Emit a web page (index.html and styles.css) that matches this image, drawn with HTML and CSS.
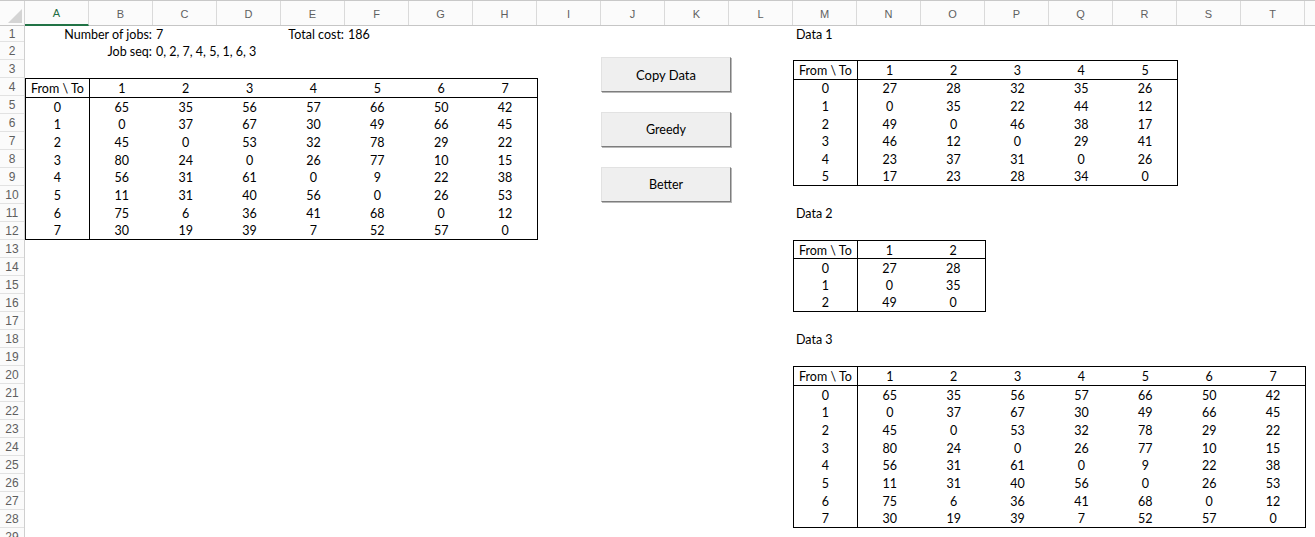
FILE: index.html
```html
<!DOCTYPE html>
<html>
<head>
<meta charset="utf-8">
<title>Sheet</title>
<link rel="stylesheet" href="styles.css">
</head>
<body>
<div class="app">
  <div class="colheads">
    <div class="corner"><svg width="25" height="26" viewBox="0 0 25 26"><polygon points="22,9 22,23 8,23" fill="#d4d4d4"/></svg></div>
    <div class="ch sel">A</div><div class="ch">B</div><div class="ch">C</div><div class="ch">D</div><div class="ch">E</div><div class="ch">F</div><div class="ch">G</div><div class="ch">H</div><div class="ch">I</div><div class="ch">J</div><div class="ch">K</div><div class="ch">L</div><div class="ch">M</div><div class="ch">N</div><div class="ch">O</div><div class="ch">P</div><div class="ch">Q</div><div class="ch">R</div><div class="ch">S</div><div class="ch">T</div><div class="ch"></div>
  </div>
  <div class="sheet">
    <div class="rowheads">
      <div class="rh first">1</div><div class="rh">2</div><div class="rh">3</div><div class="rh">4</div><div class="rh">5</div><div class="rh">6</div><div class="rh">7</div><div class="rh">8</div><div class="rh">9</div><div class="rh">10</div><div class="rh">11</div><div class="rh">12</div><div class="rh">13</div><div class="rh">14</div><div class="rh">15</div><div class="rh">16</div><div class="rh">17</div><div class="rh">18</div><div class="rh">19</div><div class="rh">20</div><div class="rh">21</div><div class="rh">22</div><div class="rh">23</div><div class="rh">24</div><div class="rh">25</div><div class="rh">26</div><div class="rh">27</div><div class="rh">28</div><div class="rh">29</div>
    </div>
    <div class="cells">
      <div class="lbl r1 c-ab">Number of jobs:</div>
      <div class="val r1 c-c">7</div>
      <div class="lbl r2 c-ab">Job seq:</div>
      <div class="val r2 c-cd">0, 2, 7, 4, 5, 1, 6, 3</div>
      <div class="lbl r1 c-e">Total cost:</div>
      <div class="val r1 c-f">186</div>
      <div class="val r1 c-m">Data 1</div>
      <div class="val r11 c-m">Data 2</div>
      <div class="val r18 c-m">Data 3</div>

      <div class="tbl t-main">
        <div class="tr c8"><span>From \ To</span><span>1</span><span>2</span><span>3</span><span>4</span><span>5</span><span>6</span><span>7</span></div>
        <div class="tr c8"><span>0</span><span>65</span><span>35</span><span>56</span><span>57</span><span>66</span><span>50</span><span>42</span></div>
        <div class="tr c8"><span>1</span><span>0</span><span>37</span><span>67</span><span>30</span><span>49</span><span>66</span><span>45</span></div>
        <div class="tr c8"><span>2</span><span>45</span><span>0</span><span>53</span><span>32</span><span>78</span><span>29</span><span>22</span></div>
        <div class="tr c8"><span>3</span><span>80</span><span>24</span><span>0</span><span>26</span><span>77</span><span>10</span><span>15</span></div>
        <div class="tr c8"><span>4</span><span>56</span><span>31</span><span>61</span><span>0</span><span>9</span><span>22</span><span>38</span></div>
        <div class="tr c8"><span>5</span><span>11</span><span>31</span><span>40</span><span>56</span><span>0</span><span>26</span><span>53</span></div>
        <div class="tr c8"><span>6</span><span>75</span><span>6</span><span>36</span><span>41</span><span>68</span><span>0</span><span>12</span></div>
        <div class="tr c8"><span>7</span><span>30</span><span>19</span><span>39</span><span>7</span><span>52</span><span>57</span><span>0</span></div>
      </div>

      <div class="tbl t-d1">
        <div class="tr c6"><span>From \ To</span><span>1</span><span>2</span><span>3</span><span>4</span><span>5</span></div>
        <div class="tr c6"><span>0</span><span>27</span><span>28</span><span>32</span><span>35</span><span>26</span></div>
        <div class="tr c6"><span>1</span><span>0</span><span>35</span><span>22</span><span>44</span><span>12</span></div>
        <div class="tr c6"><span>2</span><span>49</span><span>0</span><span>46</span><span>38</span><span>17</span></div>
        <div class="tr c6"><span>3</span><span>46</span><span>12</span><span>0</span><span>29</span><span>41</span></div>
        <div class="tr c6"><span>4</span><span>23</span><span>37</span><span>31</span><span>0</span><span>26</span></div>
        <div class="tr c6"><span>5</span><span>17</span><span>23</span><span>28</span><span>34</span><span>0</span></div>
      </div>

      <div class="tbl t-d2">
        <div class="tr c3"><span>From \ To</span><span>1</span><span>2</span></div>
        <div class="tr c3"><span>0</span><span>27</span><span>28</span></div>
        <div class="tr c3"><span>1</span><span>0</span><span>35</span></div>
        <div class="tr c3"><span>2</span><span>49</span><span>0</span></div>
      </div>

      <div class="tbl t-d3">
        <div class="tr c8"><span>From \ To</span><span>1</span><span>2</span><span>3</span><span>4</span><span>5</span><span>6</span><span>7</span></div>
        <div class="tr c8"><span>0</span><span>65</span><span>35</span><span>56</span><span>57</span><span>66</span><span>50</span><span>42</span></div>
        <div class="tr c8"><span>1</span><span>0</span><span>37</span><span>67</span><span>30</span><span>49</span><span>66</span><span>45</span></div>
        <div class="tr c8"><span>2</span><span>45</span><span>0</span><span>53</span><span>32</span><span>78</span><span>29</span><span>22</span></div>
        <div class="tr c8"><span>3</span><span>80</span><span>24</span><span>0</span><span>26</span><span>77</span><span>10</span><span>15</span></div>
        <div class="tr c8"><span>4</span><span>56</span><span>31</span><span>61</span><span>0</span><span>9</span><span>22</span><span>38</span></div>
        <div class="tr c8"><span>5</span><span>11</span><span>31</span><span>40</span><span>56</span><span>0</span><span>26</span><span>53</span></div>
        <div class="tr c8"><span>6</span><span>75</span><span>6</span><span>36</span><span>41</span><span>68</span><span>0</span><span>12</span></div>
        <div class="tr c8"><span>7</span><span>30</span><span>19</span><span>39</span><span>7</span><span>52</span><span>57</span><span>0</span></div>
      </div>

      <button class="btn btn-copy">Copy Data</button>
      <button class="btn btn-greedy">Greedy</button>
      <button class="btn btn-better">Better</button>
    </div>
  </div>
</div>
</body>
</html>
```
FILE: styles.css
```css
html, body {
  margin: 0;
  padding: 0;
  background: #fff;
  overflow: hidden;
}
.app {
  width: 1315px;
  height: 537px;
  overflow: hidden;
}
.colheads {
  display: flex;
  height: 26px;
  box-sizing: border-box;
  border-top: 1px solid #c8c8c8;
  border-bottom: 1px solid #c6c6c6;
  background: #fbfbfb;
  font-family: "Liberation Sans", Arial, sans-serif;
  font-size: 11px;
  color: #5f5f5f;
}
.corner {
  flex: 0 0 25px;
  width: 25px;
  height: 24px;
  overflow: hidden;
  border-right: 1px solid #d4d4d4;
  box-sizing: border-box;
}
.corner svg { display: block; margin-top: -1px; }
.ch {
  flex: 0 0 64px;
  width: 64px;
  box-sizing: border-box;
  border-right: 1px solid #dadada;
  display: flex;
  align-items: center;
  justify-content: center;
  padding-top: 1px;
}
.ch.sel {
  color: #1f6e43;
  border-bottom: 2px solid #217346;
  margin-bottom: -1px;
}
.sheet {
  display: flex;
}
.rowheads {
  flex: 0 0 25px;
  width: 25px;
  box-sizing: border-box;
  border-right: 1px solid #cfcfcf;
  background: #fbfbfb;
  font-family: "Liberation Sans", Arial, sans-serif;
  font-size: 12px;
  color: #5f5f5f;
}
.rh {
  height: 18px;
  box-sizing: border-box;
  border-bottom: 1px solid #e2e2e2;
  display: flex;
  align-items: center;
  justify-content: center;
  padding-top: 1px;
}
.rh.first { height: 16px; padding-top: 0; }
.cells {
  position: relative;
  display: grid;
  grid-template-columns: repeat(20, 64px) 64px;
  grid-template-rows: 16px repeat(28, 18px);
  font-family: Lato, "Open Sans", sans-serif;
  font-size: 12.5px;
  color: #000;
  margin-left: 1px;
}
.lbl, .val {
  white-space: nowrap;
  display: flex;
  align-items: center;
  padding-top: 1px;
}
.lbl { justify-content: flex-end; padding-right: 2px; }
.val { padding-left: 2px; }
.r1 { grid-row: 1; }
.r2 { grid-row: 2; }
.r11 { grid-row: 11; }
.r18 { grid-row: 18; }
.c-ab { grid-column: 1 / 3; }
.c-c { grid-column: 3; }
.c-cd { grid-column: 3 / 6; }
.c-e { grid-column: 5; }
.c-f { grid-column: 6; }
.c-m { grid-column: 13 / 15; }

.tbl {
  display: flex;
  flex-direction: column;
  border: 1px solid #000;
  box-sizing: border-box;
  margin-left: -1px;
}
.t-main { grid-column: 1 / 9; grid-row: 4 / 13; }
.t-d1 { grid-column: 13 / 19; grid-row: 3 / 10; }
.t-d2 { grid-column: 13 / 16; grid-row: 13 / 17; }
.t-d3 { grid-column: 13 / 21; grid-row: 20 / 29; }
.tr {
  flex: 1 1 0;
  display: grid;
}
.tr:first-child { border-bottom: 1px solid #000; }
.c8 { grid-template-columns: repeat(8, 1fr); }
.c6 { grid-template-columns: repeat(6, 1fr); }
.c3 { grid-template-columns: repeat(3, 1fr); }
.tr span {
  display: flex;
  align-items: center;
  justify-content: center;
  padding-top: 1px;
}
.tr span:first-child { border-right: 1px solid #000; }

.btn {
  position: absolute;
  left: 575px;
  width: 130px;
  height: 35px;
  box-sizing: border-box;
  background: #efefef;
  border: 1px solid #e2e2e2;
  border-right: 1px solid #7d7d7d;
  border-bottom: 1px solid #7d7d7d;
  box-shadow: 1px 1px 0 #b9b9b9;
  font-family: Lato, "Open Sans", sans-serif;
  font-size: 12.5px;
  color: #000;
  padding: 0;
  margin: 0;
}
.btn-copy { top: 31px; font-size: 13px; }
.btn-greedy { top: 86px; }
.btn-better { top: 141px; }
```
